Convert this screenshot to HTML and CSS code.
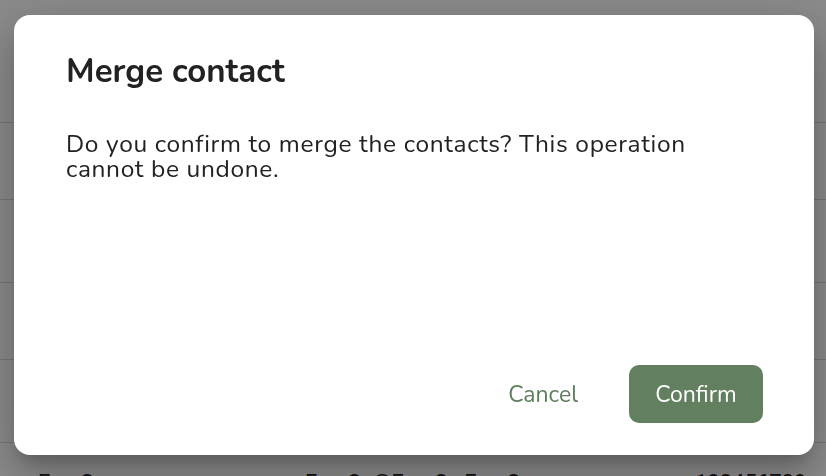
FILE: index.html
```html
<!DOCTYPE html>
<html lang="en">
<head>
    <meta charset="UTF-8">
    <meta name="viewport" content="width=device-width, initial-scale=1.0">
    <title>Contacts</title>
    <link rel="stylesheet" href="styles.css">
</head>
<body>
    <main class="page">
        <div class="page-header"></div>
        <div class="row row-short"></div>
        <div class="row row-tall"></div>
        <div class="row row-short"></div>
        <div class="row row-tall"></div>
        <div class="row row-text">
            <span class="cell cell-name">Foo Sxx</span>
            <span class="cell cell-mail">Foo.Sx@Foo.Sx.Foo.Sx</span>
            <span class="cell cell-phone">123456789</span>
        </div>
    </main>

    <div class="backdrop">
        <div class="dialog" role="dialog">
            <h2 class="dialog-title">Merge contact</h2>
            <p class="dialog-text">Do you confirm to merge the contacts? This operation cannot be undone.</p>
            <div class="dialog-actions">
                <button class="btn btn-text">Cancel</button>
                <button class="btn btn-primary">Confirm</button>
            </div>
        </div>
    </div>
</body>
</html>
```

FILE: styles.css
```css
/* Global Styles */
body {
    font-family: 'Nunito', 'Lato', 'Open Sans', sans-serif;
    margin: 0;
    padding: 0;
    background-color: #fff;
    color: #222;
    overflow: hidden;
}

/* Page behind the dialog */
.page-header {
    height: 122px;
    border-bottom: 1px solid #d8d8d8;
}

.row {
    border-bottom: 1px solid #d8d8d8;
}

.row-short {
    height: 76px;
}

.row-tall {
    height: 82px;
}

.row-text {
    display: flex;
    padding: 27px 0 0 38px;
    font-family: 'Roboto', sans-serif;
    font-size: 22px;
    line-height: 26px;
    color: #222;
}

.cell-name {
    width: 267px;
}

.cell-mail {
    width: 390px;
}

/* Dialog */
.backdrop {
    position: fixed;
    inset: 0;
    background-color: rgba(0, 0, 0, 0.46);
    display: flex;
    align-items: flex-start;
    padding: 15px 0 0 14px;
}

.dialog {
    width: 800px;
    height: 440px;
    box-sizing: border-box;
    background-color: #fff;
    border-radius: 16px;
    padding: 39px 51px 32px 52px;
    display: flex;
    flex-direction: column;
    box-shadow: 0 11px 15px -7px rgba(0, 0, 0, 0.2),
                0 24px 38px 3px rgba(0, 0, 0, 0.14),
                0 9px 46px 8px rgba(0, 0, 0, 0.12);
}

.dialog-title {
    margin: 0;
    font-size: 33px;
    font-weight: 700;
    line-height: 36px;
    color: #222;
}

.dialog-text {
    margin: 42px 0 0;
    font-size: 24.5px;
    letter-spacing: 0.65px;
    line-height: 25px;
    color: #222;
    flex: 1;
}

.dialog-actions {
    display: flex;
    justify-content: flex-end;
    align-items: center;
    gap: 18px;
}

.btn {
    font-family: inherit;
    font-size: 23px;
    border: none;
    border-radius: 10px;
    cursor: pointer;
    height: 58px;
    padding-top: 2px;
}

.btn-text {
    background: none;
    color: #5e7e5c;
    padding-left: 33px;
    padding-right: 33px;
}

.btn-primary {
    background-color: #628060;
    color: #fff;
    width: 134px;
}
```
